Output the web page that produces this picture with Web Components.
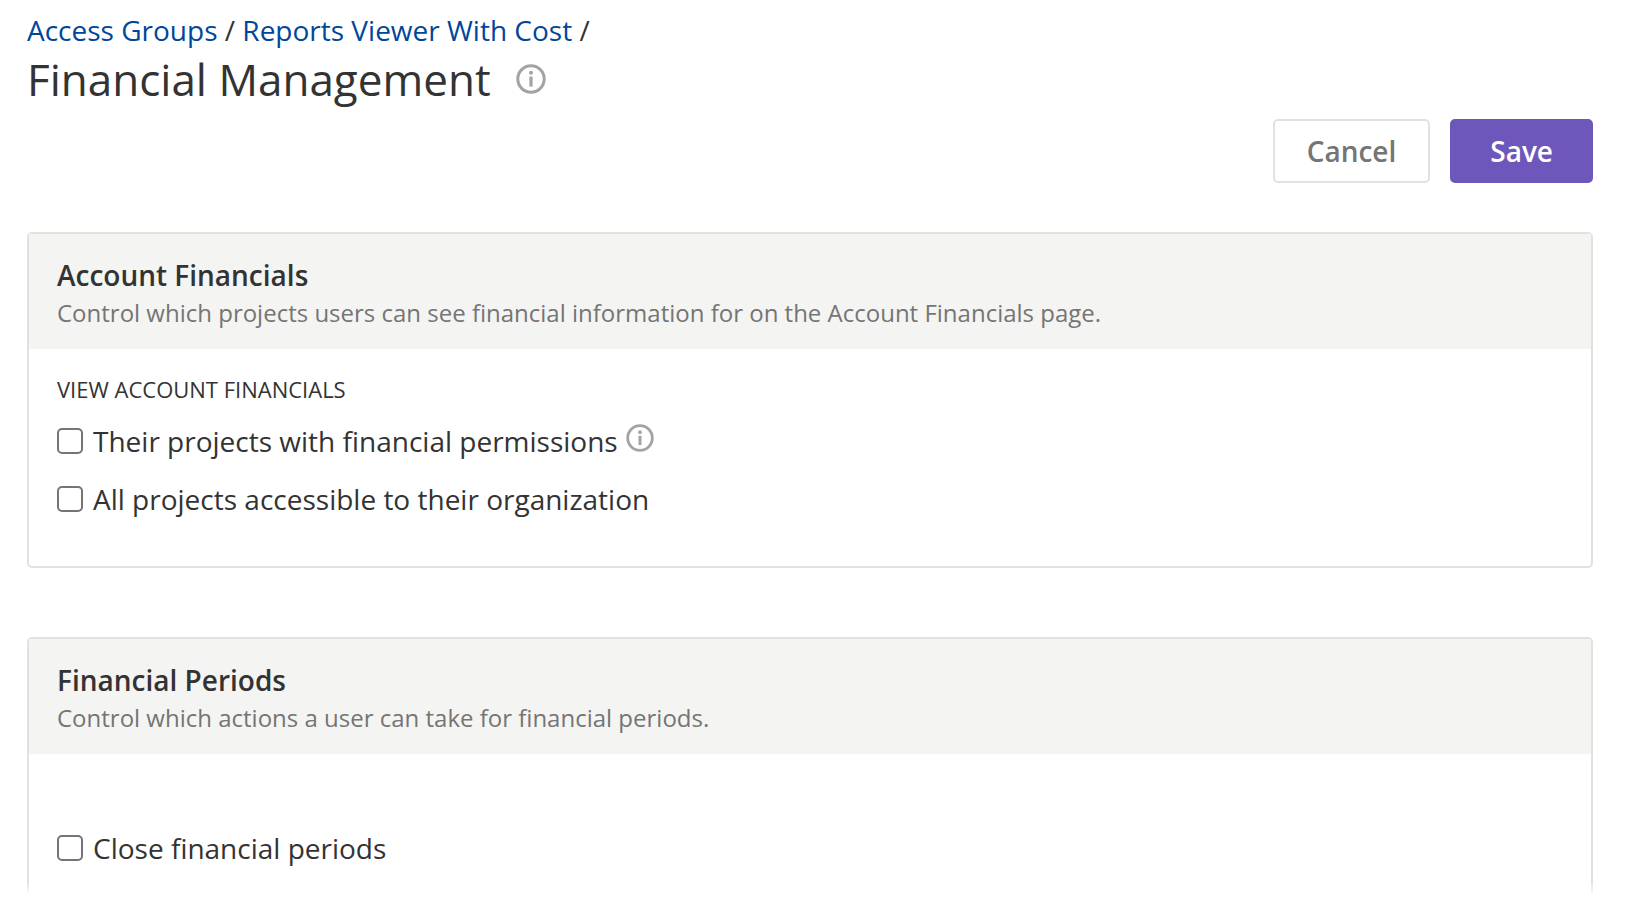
<!DOCTYPE html>
<html>
<head>
<meta charset="utf-8">
<style>
  html, body { margin: 0; height: 100%; overflow: hidden; background: #fff; }
  body { font-family: "Open Sans", sans-serif; color: #333; }
</style>
</head>
<body>
<fm-page>
  <fm-header slot="header">
    <a href="#" slot="crumbs">Access Groups</a>
    <a href="#" slot="crumbs">Reports Viewer With Cost</a>
    <span slot="title">Financial Management</span>
  </fm-header>

  <fm-card heading="Account Financials" text="Control which projects users can see financial information for on the Account Financials page." label="VIEW ACCOUNT FINANCIALS">
    <fm-check info>Their projects with financial permissions</fm-check>
    <fm-check>All projects accessible to their organization</fm-check>
  </fm-card>

  <fm-card class="second" heading="Financial Periods" text="Control which actions a user can take for financial periods.">
    <fm-check>Close financial periods</fm-check>
  </fm-card>
</fm-page>

<script>
const infoIcon = (size) => `
  <svg width="${size}" height="${size}" viewBox="0 0 30 30" fill="none">
    <circle cx="15" cy="15" r="13.2" stroke="#a3a3a3" stroke-width="3"/>
    <circle cx="15" cy="8.8" r="2" fill="#a3a3a3"/>
    <rect x="13.4" y="12.6" width="3.2" height="10" fill="#a3a3a3"/>
  </svg>`;

class FmPage extends HTMLElement {
  connectedCallback() {
    let shadow = this.attachShadow({ mode: "open" });
    shadow.innerHTML = `
    <style>
      :host { display: block; height: 898px; overflow: hidden; position: relative; }
      main { display: flex; flex-direction: column; padding: 11px 32px 0 27px; }
      .actions { display: flex; justify-content: flex-end; gap: 20px; margin-top: 10px; margin-bottom: 49px; }
      .fade { position: absolute; left: 0; right: 0; bottom: 0; height: 16px;
        background: linear-gradient(rgba(255,255,255,0), #fff 85%); }
    </style>
    <main>
      <slot name="header"></slot>
      <div class="actions">
        <fm-button>Cancel</fm-button>
        <fm-button primary>Save</fm-button>
      </div>
      <slot></slot>
    </main>
    <div class="fade"></div>`;
  }
}

class FmHeader extends HTMLElement {
  connectedCallback() {
    let shadow = this.attachShadow({ mode: "open" });
    shadow.innerHTML = `
    <style>
      :host { display: block; }
      nav { font-size: 28px; line-height: 38px; color: #333; white-space: nowrap; }
      ::slotted(a) { color: #00479b; text-decoration: none; }
      h1 { margin: 0; font-size: 44px; line-height: 60px; font-weight: 400; color: #333;
        display: flex; align-items: center; gap: 25px; }
      .icon { display: flex; }
    </style>
    <nav></nav>
    <h1><slot name="title"></slot><span class="icon">${infoIcon(30)}</span></h1>`;
    const nav = shadow.querySelector("nav");
    const links = this.querySelectorAll('[slot="crumbs"]');
    links.forEach((link, i) => {
      link.setAttribute("slot", "crumb" + i);
      const s = document.createElement("slot");
      s.name = "crumb" + i;
      nav.appendChild(s);
      nav.appendChild(document.createTextNode(" / "));
    });
  }
}

class FmButton extends HTMLElement {
  connectedCallback() {
    let shadow = this.attachShadow({ mode: "open" });
    shadow.innerHTML = `
    <style>
      :host { display: block; }
      button { font: 600 28px "Open Sans", sans-serif; height: 64px; padding: 0 32px; border-radius: 5px;
        border: 2px solid #e2e2dd; background: #fff; color: #757575; cursor: pointer; }
      button.primary { background: #6e57bb; border-color: #6e57bb; color: #fff; padding: 0 38px; }
    </style>
    <button class="${this.hasAttribute("primary") ? "primary" : ""}"><slot></slot></button>`;
  }
}

class FmCard extends HTMLElement {
  connectedCallback() {
    let shadow = this.attachShadow({ mode: "open" });
    const label = this.getAttribute("label");
    shadow.innerHTML = `
    <style>
      :host { display: block; border: 2px solid #e2e2dd; border-radius: 5px; margin-bottom: 69px; }
      :host(.second) .body { padding-top: 65px; }
      header { background: #f4f4f2; padding: 23px 28px 17.5px; }
      h2 { margin: 0; font-size: 28px; line-height: 36.5px; font-weight: 600; color: #333; }
      p { margin: 0; font-size: 24px; line-height: 38px; color: #757575; }
      .body { display: flex; flex-direction: column; padding: 25px 28px 38px; }
      .label { font-size: 22px; line-height: 30px; color: #333; margin-bottom: 8px; }
    </style>
    <header>
      <h2>${this.getAttribute("heading")}</h2>
      <p>${this.getAttribute("text")}</p>
    </header>
    <div class="body">
      ${label ? `<div class="label">${label}</div>` : ""}
      <slot></slot>
    </div>`;
  }
}

class FmCheck extends HTMLElement {
  connectedCallback() {
    let shadow = this.attachShadow({ mode: "open" });
    shadow.innerHTML = `
    <style>
      :host { display: block; }
      label { display: flex; align-items: center; gap: 10px; font-size: 28px; line-height: 58px; color: #333; }
      .box { box-sizing: border-box; width: 26px; height: 26px; border: 2px solid #757575; border-radius: 5px; background: #fff; flex: none; }
      .icon { display: flex; margin: -6px 0 0 -2px; }
    </style>
    <label>
      <span class="box"></span>
      <span><slot></slot></span>
      ${this.hasAttribute("info") ? `<span class="icon">${infoIcon(28)}</span>` : ""}
    </label>`;
  }
}

customElements.define("fm-button", FmButton);
customElements.define("fm-check", FmCheck);
customElements.define("fm-card", FmCard);
customElements.define("fm-header", FmHeader);
customElements.define("fm-page", FmPage);
</script>
</body>
</html>
